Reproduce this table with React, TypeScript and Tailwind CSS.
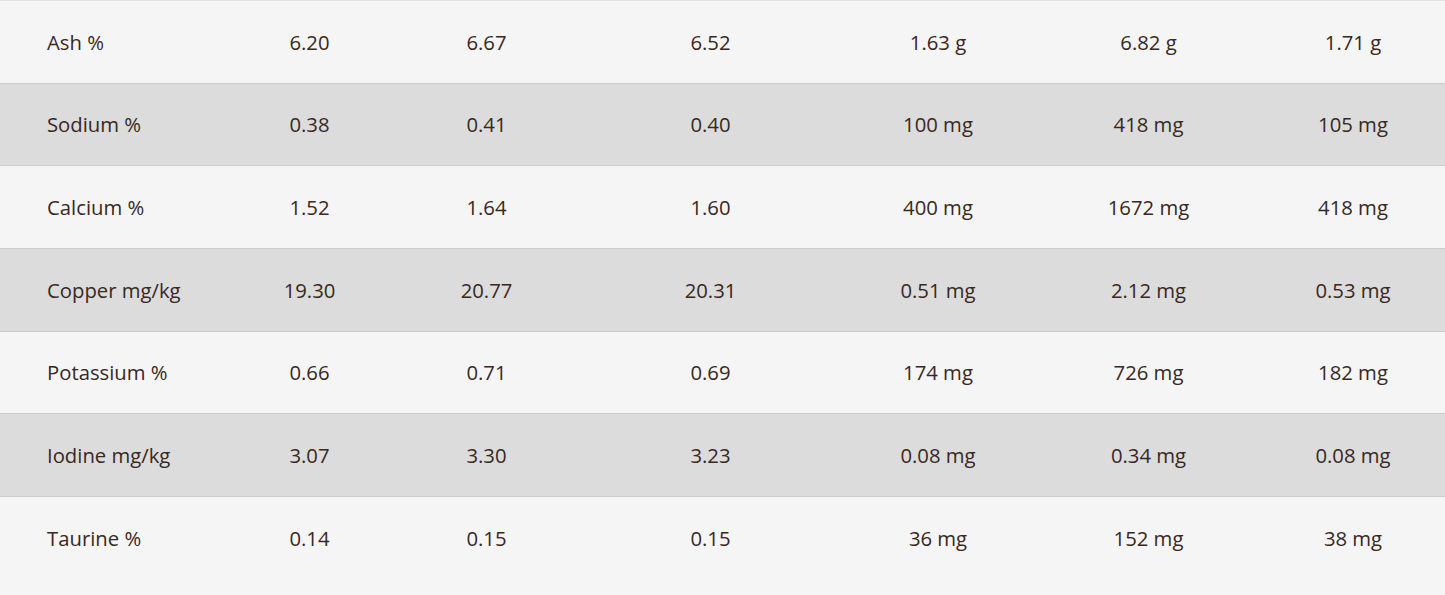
import React from "react";

const rows: string[][] = [
  ["Ash %", "6.20", "6.67", "6.52", "1.63 g", "6.82 g", "1.71 g"],
  ["Sodium %", "0.38", "0.41", "0.40", "100 mg", "418 mg", "105 mg"],
  ["Calcium %", "1.52", "1.64", "1.60", "400 mg", "1672 mg", "418 mg"],
  ["Copper mg/kg", "19.30", "20.77", "20.31", "0.51 mg", "2.12 mg", "0.53 mg"],
  ["Potassium %", "0.66", "0.71", "0.69", "174 mg", "726 mg", "182 mg"],
  ["Iodine mg/kg", "3.07", "3.30", "3.23", "0.08 mg", "0.34 mg", "0.08 mg"],
  ["Taurine %", "0.14", "0.15", "0.15", "36 mg", "152 mg", "38 mg"],
];

export default function App() {
  return (
    <div
      className="w-full min-h-[595px] bg-[#f5f5f5] text-[#38281e] text-[20.3px]"
      style={{ fontFamily: '"Open Sans", "Noto Sans", sans-serif' }}
    >
      {rows.map((r, i) => (
        <div
          key={i}
          className={`grid grid-cols-[227px_165px_189px_259px_196px_225px_184px] h-[82.7px] items-center border-t ${
            i === 0 ? "border-[#e2e2e2]" : "border-[#cbcbcb]"
          } ${i % 2 === 1 ? "bg-[#dcdcdc]" : "bg-[#f5f5f5]"}`}
        >
          {r.map((c, j) => (
            <div key={j} className={j === 0 ? "pl-[47px] text-left" : "text-center"}>
              {c}
            </div>
          ))}
        </div>
      ))}
    </div>
  );
}
